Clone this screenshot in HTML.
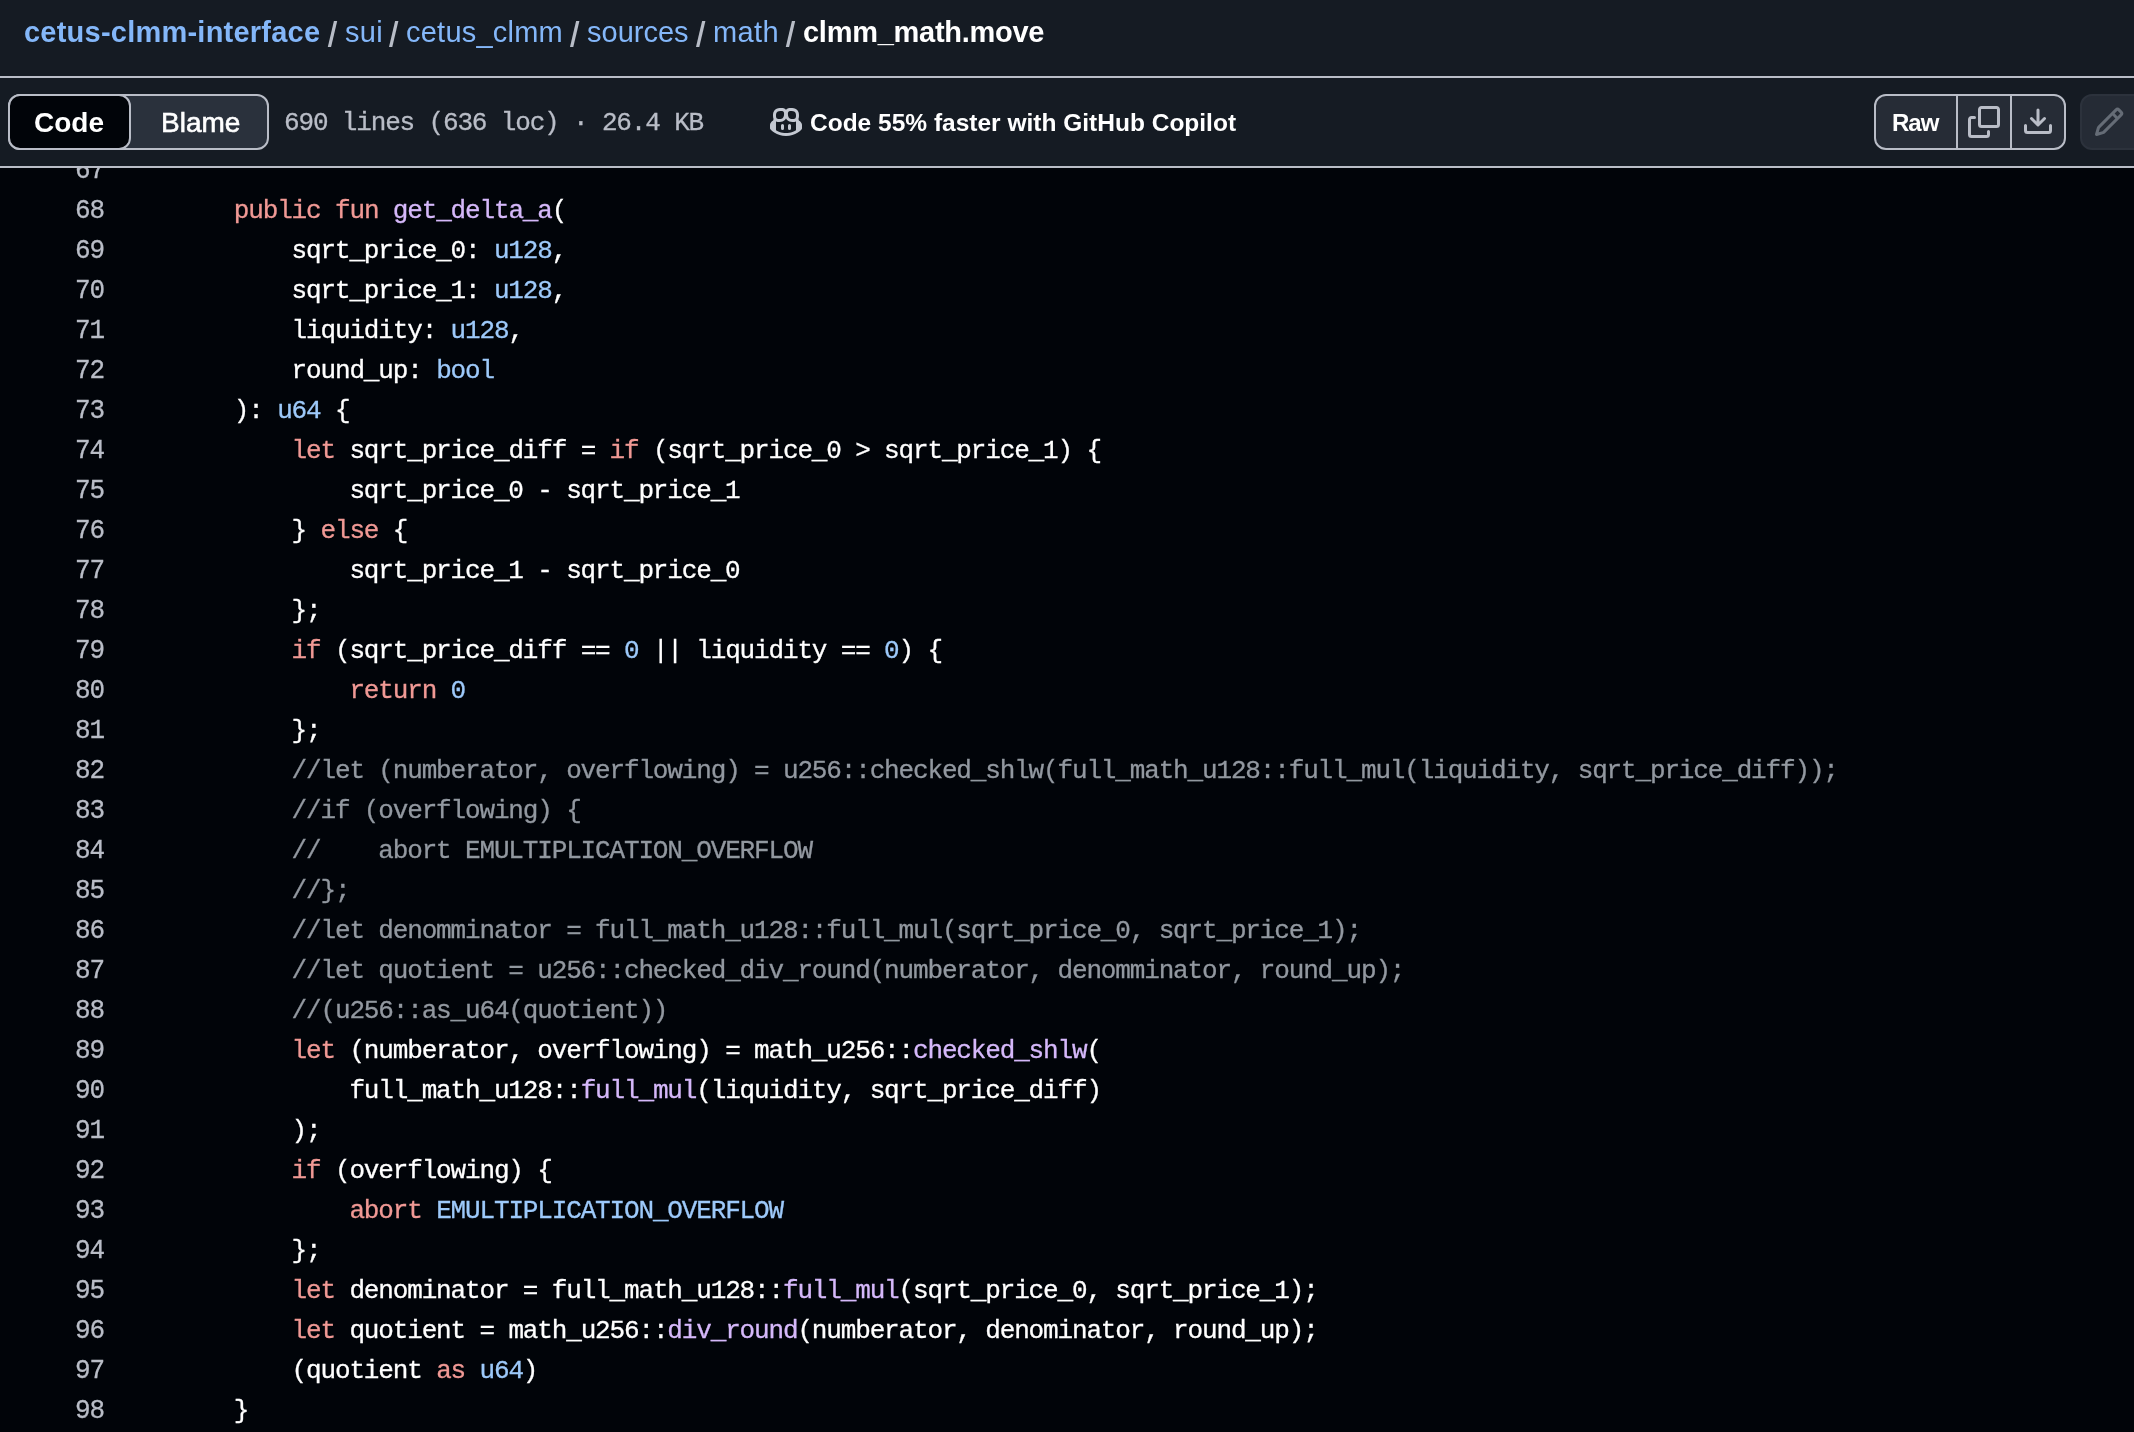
<!DOCTYPE html>
<html lang="en">
<head>
<meta charset="utf-8">
<title>clmm_math.move</title>
<style>
*{box-sizing:border-box;margin:0;padding:0}
html,body{width:2134px;height:1432px;overflow:hidden;background:#010409}
body{position:relative;font-family:"Liberation Sans",sans-serif;color:#fff}
#code{position:absolute;left:0;top:151px;width:2134px;font-family:"Liberation Mono",monospace;font-size:26px;letter-spacing:-1.152px;line-height:40px;color:#fff;will-change:transform;-webkit-text-stroke:0.3px}
.ln{position:relative;height:40px}
.no{position:absolute;left:0;top:0;width:104px;text-align:right;color:#b9bdc7;transform:scaleY(1.09);transform-origin:0 29px}
.cd{position:absolute;left:176px;top:0;white-space:pre}
.k{color:#f09995}.f{color:#d5b8fa}.c{color:#9dc9fa}.m{color:#9298a0}
#hdr{position:absolute;left:0;top:0;width:2134px;height:168px;background:#151b23}
.hl{position:absolute;left:0;width:2134px;height:2px;background:#b9bdc7}
.t{position:absolute;white-space:pre;line-height:1}
.bc{font-size:29px;color:#84b7f9;top:18px}
.sl{font-size:29px;color:#b9bdc7;top:18px}

.seg{position:absolute;left:8px;top:94px;width:261px;height:56px;border:2px solid #b9bdc7;border-radius:12px;background:#2a313c}
.segsel{position:absolute;left:8px;top:94px;width:123px;height:56px;border:2px solid #b9bdc7;border-radius:12px;background:#010409}
.b24{font-size:24.5px;font-weight:bold;color:#fff}
.meta{font-family:"Liberation Mono",monospace;font-size:26px;letter-spacing:-1.152px;color:#b9bdc7;-webkit-text-stroke:0.3px}
.grp{position:absolute;left:1874px;top:94px;width:192px;height:56px;border:2px solid #b9bdc7;border-radius:12px;background:#262c36}
.dv{position:absolute;top:94px;width:2px;height:56px;background:#b9bdc7}
.pen{position:absolute;left:2080px;top:94px;width:90px;height:56px;border:2px solid #2c323c;border-radius:12px;background:#252b35}
svg{position:absolute;display:block}
#txt{position:absolute;left:0;top:0;width:2134px;height:168px;will-change:transform}
</style>
</head>
<body>
<div id="code">
<div class="ln"><span class="no">67</span><span class="cd"></span></div>
<div class="ln"><span class="no">68</span><span class="cd">    <span class="k">public</span> <span class="k">fun</span> <span class="f">get_delta_a</span>(</span></div>
<div class="ln"><span class="no">69</span><span class="cd">        sqrt_price_0: <span class="c">u128</span>,</span></div>
<div class="ln"><span class="no">70</span><span class="cd">        sqrt_price_1: <span class="c">u128</span>,</span></div>
<div class="ln"><span class="no">71</span><span class="cd">        liquidity: <span class="c">u128</span>,</span></div>
<div class="ln"><span class="no">72</span><span class="cd">        round_up: <span class="c">bool</span></span></div>
<div class="ln"><span class="no">73</span><span class="cd">    ): <span class="c">u64</span> {</span></div>
<div class="ln"><span class="no">74</span><span class="cd">        <span class="k">let</span> sqrt_price_diff = <span class="k">if</span> (sqrt_price_0 &gt; sqrt_price_1) {</span></div>
<div class="ln"><span class="no">75</span><span class="cd">            sqrt_price_0 - sqrt_price_1</span></div>
<div class="ln"><span class="no">76</span><span class="cd">        } <span class="k">else</span> {</span></div>
<div class="ln"><span class="no">77</span><span class="cd">            sqrt_price_1 - sqrt_price_0</span></div>
<div class="ln"><span class="no">78</span><span class="cd">        };</span></div>
<div class="ln"><span class="no">79</span><span class="cd">        <span class="k">if</span> (sqrt_price_diff == <span class="c">0</span> || liquidity == <span class="c">0</span>) {</span></div>
<div class="ln"><span class="no">80</span><span class="cd">            <span class="k">return</span> <span class="c">0</span></span></div>
<div class="ln"><span class="no">81</span><span class="cd">        };</span></div>
<div class="ln"><span class="no">82</span><span class="cd">        <span class="m">//let (numberator, overflowing) = u256::checked_shlw(full_math_u128::full_mul(liquidity, sqrt_price_diff));</span></span></div>
<div class="ln"><span class="no">83</span><span class="cd">        <span class="m">//if (overflowing) {</span></span></div>
<div class="ln"><span class="no">84</span><span class="cd">        <span class="m">//    abort EMULTIPLICATION_OVERFLOW</span></span></div>
<div class="ln"><span class="no">85</span><span class="cd">        <span class="m">//};</span></span></div>
<div class="ln"><span class="no">86</span><span class="cd">        <span class="m">//let denomminator = full_math_u128::full_mul(sqrt_price_0, sqrt_price_1);</span></span></div>
<div class="ln"><span class="no">87</span><span class="cd">        <span class="m">//let quotient = u256::checked_div_round(numberator, denomminator, round_up);</span></span></div>
<div class="ln"><span class="no">88</span><span class="cd">        <span class="m">//(u256::as_u64(quotient))</span></span></div>
<div class="ln"><span class="no">89</span><span class="cd">        <span class="k">let</span> (numberator, overflowing) = math_u256::<span class="f">checked_shlw</span>(</span></div>
<div class="ln"><span class="no">90</span><span class="cd">            full_math_u128::<span class="f">full_mul</span>(liquidity, sqrt_price_diff)</span></div>
<div class="ln"><span class="no">91</span><span class="cd">        );</span></div>
<div class="ln"><span class="no">92</span><span class="cd">        <span class="k">if</span> (overflowing) {</span></div>
<div class="ln"><span class="no">93</span><span class="cd">            <span class="k">abort</span> <span class="c">EMULTIPLICATION_OVERFLOW</span></span></div>
<div class="ln"><span class="no">94</span><span class="cd">        };</span></div>
<div class="ln"><span class="no">95</span><span class="cd">        <span class="k">let</span> denominator = full_math_u128::<span class="f">full_mul</span>(sqrt_price_0, sqrt_price_1);</span></div>
<div class="ln"><span class="no">96</span><span class="cd">        <span class="k">let</span> quotient = math_u256::<span class="f">div_round</span>(numberator, denominator, round_up);</span></div>
<div class="ln"><span class="no">97</span><span class="cd">        (quotient <span class="k">as</span> <span class="c">u64</span>)</span></div>
<div class="ln"><span class="no">98</span><span class="cd">    }</span></div>
</div>
<div id="hdr">
<div class="hl" style="top:76px"></div>
<div class="hl" style="top:166px"></div>

<div class="seg"></div>
<div class="segsel"></div>
<svg style="left:770px;top:106px" width="32" height="32" viewBox="0 0 16 16" fill="#c4c9d2"><path d="M7.998 15.035c-4.562 0-7.873-2.914-7.998-3.749V9.338c.085-.628.677-1.686 1.588-2.065.013-.07.024-.143.036-.218.029-.183.06-.384.126-.612-.201-.508-.254-1.084-.254-1.656 0-.87.128-1.769.693-2.484.579-.733 1.494-1.124 2.724-1.261 1.206-.134 2.262.034 2.944.765.05.053.096.108.139.165.044-.057.094-.112.143-.165.682-.731 1.738-.899 2.944-.765 1.23.137 2.145.528 2.724 1.261.566.715.693 1.614.693 2.484 0 .572-.053 1.148-.254 1.656.066.228.098.429.126.612.012.076.024.148.037.218.924.385 1.522 1.471 1.591 2.095v1.872c0 .766-3.351 3.795-8.002 3.795Zm0-1.485c2.28 0 4.584-1.11 5.002-1.433V7.862l-.023-.116c-.49.21-1.075.291-1.727.291-1.146 0-2.059-.327-2.71-.991A3.222 3.222 0 0 1 8 6.303a3.24 3.24 0 0 1-.544.743c-.65.664-1.563.991-2.71.991-.652 0-1.236-.081-1.727-.291l-.023.116v4.255c.419.323 2.722 1.433 5.002 1.433ZM6.762 2.83c-.193-.206-.637-.413-1.682-.297-1.019.113-1.479.404-1.713.7-.247.312-.369.789-.369 1.554 0 .793.129 1.171.308 1.371.162.181.519.379 1.442.379.853 0 1.339-.235 1.638-.54.315-.322.527-.827.617-1.553.117-.935-.037-1.395-.241-1.614Zm4.155-.297c-1.044-.116-1.488.091-1.681.297-.204.219-.359.679-.242 1.614.091.726.303 1.231.618 1.553.299.305.784.54 1.638.54.922 0 1.28-.198 1.442-.379.179-.2.308-.578.308-1.371 0-.765-.123-1.242-.37-1.554-.233-.296-.693-.587-1.713-.7Z"/><path d="M6.25 9.037a.75.75 0 0 1 .75.75v1.501a.75.75 0 0 1-1.5 0V9.787a.75.75 0 0 1 .75-.75Zm4.25.75v1.501a.75.75 0 0 1-1.5 0V9.787a.75.75 0 0 1 1.5 0Z"/></svg>
<div class="grp"></div>
<div class="dv" style="left:1956px"></div>
<div class="dv" style="left:2010px"></div>
<svg style="left:1968px;top:106px" width="32" height="32" viewBox="0 0 16 16" fill="#b9bdc7"><path d="M0 6.75C0 5.784.784 5 1.75 5h1.5a.75.75 0 0 1 0 1.5h-1.5a.25.25 0 0 0-.25.25v7.5c0 .138.112.25.25.25h7.5a.25.25 0 0 0 .25-.25v-1.5a.75.75 0 0 1 1.5 0v1.5A1.75 1.75 0 0 1 9.25 16h-7.5A1.75 1.75 0 0 1 0 14.25Z"/><path d="M5 1.75C5 .784 5.784 0 6.75 0h7.5C15.216 0 16 .784 16 1.75v7.5A1.75 1.75 0 0 1 14.25 11h-7.5A1.75 1.75 0 0 1 5 9.25Zm1.75-.25a.25.25 0 0 0-.25.25v7.5c0 .138.112.25.25.25h7.5a.25.25 0 0 0 .25-.25v-7.5a.25.25 0 0 0-.25-.25Z"/></svg>
<svg style="left:2022px;top:106px" width="32" height="32" viewBox="0 0 16 16" fill="#b9bdc7"><path d="M2.75 14A1.75 1.75 0 0 1 1 12.25v-2.5a.75.75 0 0 1 1.5 0v2.5c0 .138.112.25.25.25h10.5a.25.25 0 0 0 .25-.25v-2.5a.75.75 0 0 1 1.5 0v2.5A1.75 1.75 0 0 1 13.25 14Z"/><path d="M7.25 7.689V2a.75.75 0 0 1 1.5 0v5.689l1.97-1.969a.749.749 0 1 1 1.06 1.06l-3.25 3.25a.749.749 0 0 1-1.06 0L4.22 6.78a.749.749 0 1 1 1.06-1.06l1.97 1.969Z"/></svg>
<div class="pen"></div>
<svg style="left:2093px;top:106px" width="32" height="32" viewBox="0 0 16 16" fill="#656c76"><path d="M11.013 1.427a1.75 1.75 0 0 1 2.474 0l1.086 1.086a1.75 1.75 0 0 1 0 2.474l-8.61 8.61c-.21.21-.47.364-.756.445l-3.251.93a.75.75 0 0 1-.927-.928l.929-3.25c.081-.286.235-.547.445-.758l8.61-8.61Zm.176 4.823L9.75 4.81l-6.286 6.287a.253.253 0 0 0-.064.108l-.558 1.953 1.953-.558a.253.253 0 0 0 .108-.064Zm1.238-3.763a.25.25 0 0 0-.354 0L10.811 3.75l1.439 1.44 1.263-1.263a.25.25 0 0 0 0-.354Z"/></svg>
</div>
<div id="txt">
<span class="t" style="left:161px;top:109px;font-size:28px;color:#fff;-webkit-text-stroke:0.6px">Blame</span>
<span class="t bc" style="left:24px;font-weight:bold;letter-spacing:0.23px">cetus-clmm-interface</span>
<span class="t bc" style="left:345px;letter-spacing:0.3px">sui</span>
<span class="t bc" style="left:406px;letter-spacing:0.23px">cetus_clmm</span>
<span class="t bc" style="left:587px">sources</span>
<span class="t bc" style="left:713px;letter-spacing:0.4px">math</span>
<span class="t bc" style="left:803px;font-weight:bold;color:#fff;letter-spacing:-0.27px">clmm_math.move</span>
<span class="t b24" style="left:34px;top:109px;font-size:28px">Code</span>
<span class="t meta" style="left:284px;top:110px">690 lines (636 loc) · 26.4 KB</span>
<span class="t b24" style="left:810px;top:111px">Code 55% faster with GitHub Copilot</span>
<span class="t b24" style="left:1892px;top:111px;font-size:24px;letter-spacing:-1px">Raw</span>
<svg style="left:0;top:0" width="1100" height="76" viewBox="0 0 1100 76" fill="#b8bdc7"><path d="M333.90000000000003 21h3.3l-6.1 26h-3.3z"/><path d="M395.1 21h3.3l-6.1 26h-3.3z"/><path d="M576.1 21h3.3l-6.1 26h-3.3z"/><path d="M702.1 21h3.3l-6.1 26h-3.3z"/><path d="M791.9 21h3.3l-6.1 26h-3.3z"/></svg>
</div>
</body>
</html>
